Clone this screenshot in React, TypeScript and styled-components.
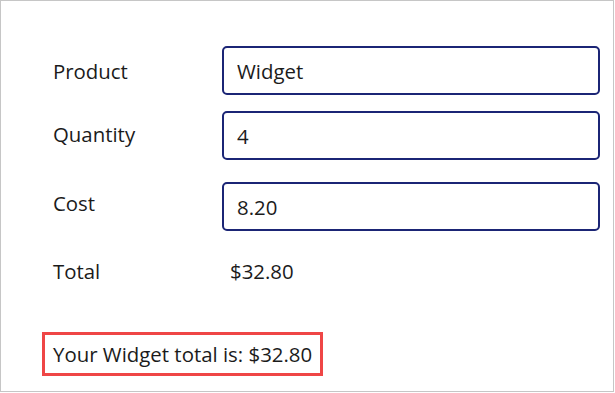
import React from "react";
import styled, { createGlobalStyle } from "styled-components";

const GlobalStyle = createGlobalStyle`
  html, body {
    margin: 0;
    padding: 0;
    background: #ffffff;
  }
  body {
    font-family: "Open Sans", "Noto Sans", sans-serif;
    color: #1b1b1b;
  }
`;

const Screen = styled.div`
  box-sizing: border-box;
  width: 614px;
  height: 392px;
  border: 1px solid #c6c6c6;
  background: #fff;
  padding: 45px 0 0 52px;
  display: flex;
  flex-direction: column;
`;

const Form = styled.div`
  display: flex;
  flex-direction: column;
`;

const Row = styled.div<{ $gap?: number }>`
  display: grid;
  grid-template-columns: 169px 378px;
  align-items: center;
  margin-top: ${(p) => p.$gap ?? 0}px;
  min-height: 49px;
`;

const Label = styled.div<{ $shift?: number }>`
  font-size: 20.4px;
  position: relative;
  top: ${(p) => p.$shift ?? 0}px;
`;

const Input = styled.input`
  box-sizing: border-box;
  width: 378px;
  height: 49px;
  border: 2px solid #1b2575;
  border-radius: 5px;
  padding: 0 13px;
  font-family: inherit;
  font-size: 20.4px;
  color: #1b1b1b;
  background: #fff;
  outline: none;
`;

const Value = styled(Label)`
  padding-left: 8px;
`;

const Result = styled.div`
  box-sizing: border-box;
  align-self: flex-start;
  margin: 36px 0 0 -11px;
  height: 44px;
  display: flex;
  align-items: center;
  padding: 0 8px;
  border: 3px solid #ef4646;
  font-size: 20.4px;
`;

export default function App() {
  const product = "Widget";
  const quantity = 4;
  const cost = 8.2;
  const total = `$${(quantity * cost).toFixed(2)}`;

  return (
    <>
      <GlobalStyle />
      <Screen>
        <Form>
          <Row>
            <Label>Product</Label>
            <Input defaultValue={product} />
          </Row>
          <Row $gap={16}>
            <Label $shift={-2}>Quantity</Label>
            <Input defaultValue={String(quantity)} />
          </Row>
          <Row $gap={22}>
            <Label $shift={-4}>Cost</Label>
            <Input defaultValue={cost.toFixed(2)} />
          </Row>
          <Row $gap={16}>
            <Label $shift={-1}>Total</Label>
            <Value $shift={-1}>{total}</Value>
          </Row>
        </Form>
        <Result>
          Your {product} total is: {total}
        </Result>
      </Screen>
    </>
  );
}
